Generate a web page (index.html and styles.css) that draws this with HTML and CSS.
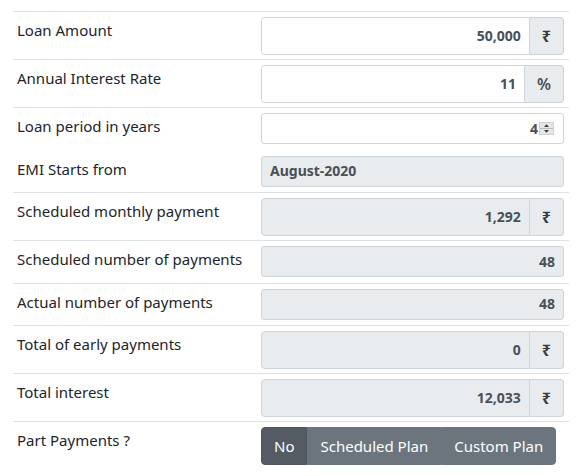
FILE: index.html
```html
<!DOCTYPE html>
<html lang="en">
<head>
<meta charset="utf-8">
<title>Loan EMI</title>
<link rel="stylesheet" href="styles.css">
</head>
<body>
<div class="calc">
  <div class="row">
    <div class="label">Loan Amount</div>
    <div class="field">
      <div class="input-group"><div class="control value">50,000</div><span class="addon rupee">₹</span></div>
    </div>
  </div>
  <div class="row">
    <div class="label">Annual Interest Rate</div>
    <div class="field">
      <div class="input-group"><div class="control value">11</div><span class="addon">%</span></div>
    </div>
  </div>
  <div class="row sm">
    <div class="label">Loan period in years</div>
    <div class="field">
      <div class="control small value number">4<svg class="spin" width="15" height="13" viewBox="0 0 15 13"><rect x="0.5" y="0.5" width="14" height="12" fill="#e6e6e6" stroke="#cfcfcf"/><line x1="1" y1="6.5" x2="14" y2="6.5" stroke="#bdbdbd"/><polygon points="7.5,2.3 10,5 5,5" fill="#3c3c3c"/><polygon points="5,8 10,8 7.5,10.7" fill="#3c3c3c"/></svg></div>
    </div>
  </div>
  <div class="row sm plain">
    <div class="label">EMI Starts from</div>
    <div class="field">
      <div class="control small readonly value left">August-2020</div>
    </div>
  </div>
  <div class="row">
    <div class="label">Scheduled monthly payment</div>
    <div class="field">
      <div class="input-group"><div class="control readonly value">1,292</div><span class="addon rupee">₹</span></div>
    </div>
  </div>
  <div class="row sm">
    <div class="label">Scheduled number of payments</div>
    <div class="field">
      <div class="control small readonly value">48</div>
    </div>
  </div>
  <div class="row sm">
    <div class="label">Actual number of payments</div>
    <div class="field">
      <div class="control small readonly value">48</div>
    </div>
  </div>
  <div class="row">
    <div class="label">Total of early payments</div>
    <div class="field">
      <div class="input-group"><div class="control readonly value">0</div><span class="addon rupee">₹</span></div>
    </div>
  </div>
  <div class="row">
    <div class="label">Total interest</div>
    <div class="field">
      <div class="input-group"><div class="control readonly value">12,033</div><span class="addon rupee">₹</span></div>
    </div>
  </div>
  <div class="row">
    <div class="label">Part Payments ?</div>
    <div class="field">
      <div class="btn-group">
        <span class="btn active">No</span><span class="btn">Scheduled Plan</span><span class="btn">Custom Plan</span>
      </div>
    </div>
  </div>
</div>
</body>
</html>
```

FILE: styles.css
```css
* { box-sizing: border-box; }

body {
  margin: 0;
  background: #fff;
  color: #212529;
  font-family: "Noto Sans", "Open Sans", "DejaVu Sans", sans-serif;
  font-size: 15px;
  line-height: 24px;
}

.calc {
  padding: 11px 14px 0 13px;
}

.row {
  display: grid;
  grid-template-columns: 243px 1fr;
  border-top: 1px solid #dee2e6;
}

.row.plain {
  border-top-color: transparent;
}

.label {
  padding: 6px 4px 4px 4px;
}

.field {
  padding: 4.5px 5px;
}

.row.sm .field {
  padding: 5px 5px 5.5px;
}

.input-group {
  display: flex;
  height: 38px;
}

.control {
  flex: 1;
  display: flex;
  align-items: center;
  justify-content: flex-end;
  border: 1px solid #ced4da;
  border-radius: 4px;
  background: #fff;
  padding: 0 8px;
  color: #495057;
}

.input-group .control {
  border-radius: 4px 0 0 4px;
}

.control.small {
  height: 31px;
  border-radius: 3px;
}

.control.readonly {
  background: #e9ecef;
}

.control.left {
  justify-content: flex-start;
}

.value {
  font-size: 14px;
  font-weight: 700;
}

.number {
  padding-right: 9px;
}

.spin {
  display: block;
  margin-left: 1px;
}

.addon {
  display: flex;
  align-items: center;
  padding: 0 12px;
  background: #e9ecef;
  border: 1px solid #ced4da;
  border-left: none;
  border-radius: 0 4px 4px 0;
  color: #495057;
  font-size: 16px;
  font-weight: 600;
}

.addon.rupee {
  font-weight: 700;
  color: #343a40;
}

.btn-group {
  display: inline-flex;
}

.btn {
  display: block;
  padding: 6px 12px;
  height: 38px;
  background: #6c757d;
  border: 1px solid #6c757d;
  color: #fff;
  font-size: 15px;
  line-height: 24px;
}

.btn:first-child {
  border-radius: 4px 0 0 4px;
}

.btn:last-child {
  border-radius: 0 4px 4px 0;
}

.btn.active {
  background: #545b62;
  border-color: #4e555b;
}
```
